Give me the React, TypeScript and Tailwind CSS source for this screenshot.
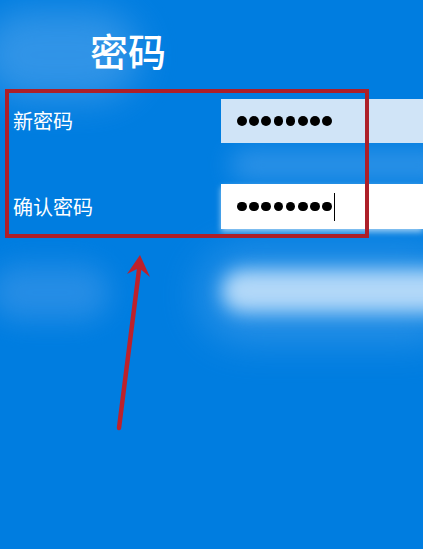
import React from "react";

const Dots = () => (
  <div className="flex items-center gap-[2.6px]">
    {Array.from({ length: 8 }).map((_, i) => (
      <span key={i} className="block w-[9.6px] h-[9.6px] rounded-full bg-black" />
    ))}
  </div>
);

export default function App() {
  return (
    <div
      className="relative w-[423px] h-[549px] overflow-hidden bg-[#007de0]"
      style={{ fontFamily: '"Noto Sans CJK SC", "Noto Sans", sans-serif' }}
    >
      {/* soft background glows */}
      <div className="absolute left-[-20px] top-[10px] w-[160px] h-[90px] rounded-full bg-[#3d9ae9] blur-[18px] opacity-80" />
      <div className="absolute left-[-10px] top-[265px] w-[120px] h-[55px] rounded-full bg-[#2a8fe6] blur-[14px] opacity-90" />
      <div className="absolute left-[200px] top-[250px] w-[260px] h-[90px] rounded-full bg-[#3f9ceb] blur-[20px] opacity-70" />
      <div className="absolute left-[222px] top-[270px] w-[240px] h-[42px] rounded-full bg-[#b2d8f8] blur-[9px]" />
      <div className="absolute left-[230px] top-[150px] w-[220px] h-[30px] rounded-full bg-[#3a98e9] blur-[12px] opacity-80" />

      <div className="relative">
        <div className="pt-[28px] pl-[90px] text-white text-[38px] leading-[44px] font-medium">密码</div>

        <div className="mt-[27px] flex flex-col gap-[41px]">
          <div className="flex items-center h-[44px]">
            <div className="w-[221px] pl-[13px] text-white text-[20px] leading-[24px]">新密码</div>
            <div className="flex-1 h-full flex items-center pl-[16px] bg-[#d0e4f7]">
              <Dots />
            </div>
          </div>
          <div className="flex items-center h-[45px]">
            <div className="w-[221px] pl-[13px] text-white text-[20px] leading-[24px]">确认密码</div>
            <div className="flex-1 h-full flex items-center pl-[16px] bg-white shadow-[0_3px_6px_rgba(255,255,255,0.6)]">
              <Dots />
              <span className="block ml-[2px] w-[1.5px] h-[28px] bg-black" />
            </div>
          </div>
        </div>
      </div>

      {/* annotation box */}
      <div className="absolute left-[5px] top-[89px] w-[364px] h-[149px] border-[4px] border-[#ad1f29]" />

      {/* annotation arrow */}
      <svg className="absolute left-0 top-0" width="423" height="549" viewBox="0 0 423 549">
        <line x1="119" y1="428" x2="139.5" y2="266" stroke="#bd212b" strokeWidth="4.5" strokeLinecap="round" />
        <polygon points="140,255 127,274 139,268 150,277" fill="#bd212b" />
      </svg>
    </div>
  );
}
